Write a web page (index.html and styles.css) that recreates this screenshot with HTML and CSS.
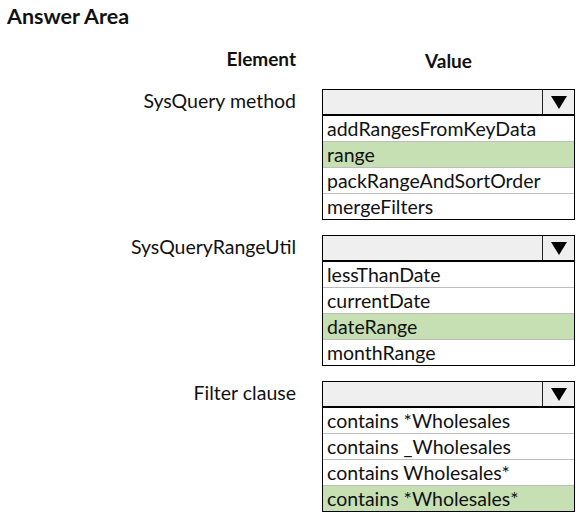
FILE: index.html
```html
<!DOCTYPE html>
<html>
<head>
<meta charset="utf-8">
<link rel="stylesheet" href="styles.css">
</head>
<body>
<div class="page">
  <h1 class="title">Answer Area</h1>
  <div class="heads">
    <div class="head-el">Element</div>
    <div class="head-val">Value</div>
  </div>
  <div class="section">
    <div class="label">SysQuery method</div>
    <div class="dd">
      <div class="dd-head"><span class="dd-field"></span><span class="dd-arrow"><svg width="16" height="13" viewBox="0 0 16 13"><polygon points="0,0 16,0 8,13" fill="#000"/></svg></span></div>
      <div class="opt">addRangesFromKeyData</div>
      <div class="opt sel">range</div>
      <div class="opt">packRangeAndSortOrder</div>
      <div class="opt">mergeFilters</div>
    </div>
  </div>
  <div class="section">
    <div class="label">SysQueryRangeUtil</div>
    <div class="dd">
      <div class="dd-head"><span class="dd-field"></span><span class="dd-arrow"><svg width="16" height="13" viewBox="0 0 16 13"><polygon points="0,0 16,0 8,13" fill="#000"/></svg></span></div>
      <div class="opt">lessThanDate</div>
      <div class="opt">currentDate</div>
      <div class="opt sel">dateRange</div>
      <div class="opt">monthRange</div>
    </div>
  </div>
  <div class="section">
    <div class="label">Filter clause</div>
    <div class="dd">
      <div class="dd-head"><span class="dd-field"></span><span class="dd-arrow"><svg width="16" height="13" viewBox="0 0 16 13"><polygon points="0,0 16,0 8,13" fill="#000"/></svg></span></div>
      <div class="opt">contains *Wholesales</div>
      <div class="opt">contains _Wholesales</div>
      <div class="opt">contains Wholesales*</div>
      <div class="opt sel">contains *Wholesales*</div>
    </div>
  </div>
</div>
</body>
</html>
```

FILE: styles.css
```css
html, body {
  margin: 0;
  padding: 0;
  background: #fff;
}
.page {
  width: 576px;
  height: 512px;
  font-family: "Lato", "Open Sans", sans-serif;
  color: #111;
  overflow: hidden;
}
.title {
  margin: 0;
  padding: 4px 7px 0;
  font-size: 21.5px;
  line-height: 24px;
  font-weight: bold;
  height: 28px;
  box-sizing: border-box;
}
.heads {
  display: grid;
  grid-template-columns: 296px 253px;
  column-gap: 26px;
  margin-top: 19px;
  height: 24px;
  line-height: 24px;
  font-weight: bold;
  font-size: 19px;
}
.head-el { text-align: right; }
.head-val { text-align: center; padding-top: 2px; }
.section {
  display: grid;
  grid-template-columns: 296px 253px;
  column-gap: 26px;
  align-items: start;
  margin-top: 18px;
}
.section + .section { margin-top: 15px; }
.label {
  text-align: right;
  font-size: 19.5px;
  line-height: 24px;
  margin-top: 0;
}
.dd {
  border: 1px solid #000;
  font-size: 19.5px;
}
.dd-head {
  display: flex;
  height: 24px;
  background: #efefef;
  border-bottom: 2px solid #000;
}
.dd-field { flex: 1; }
.dd-arrow {
  width: 31px;
  border-left: 1px solid #222;
  display: flex;
  align-items: center;
  justify-content: center;
}
.opt {
  height: 25px;
  line-height: 25px;
  padding-left: 4px;
  border-bottom: 1px solid #bdbdbd;
  white-space: nowrap;
}
.opt:last-child { border-bottom: none; }
.opt.sel { background: #c6e0b4; }
```
